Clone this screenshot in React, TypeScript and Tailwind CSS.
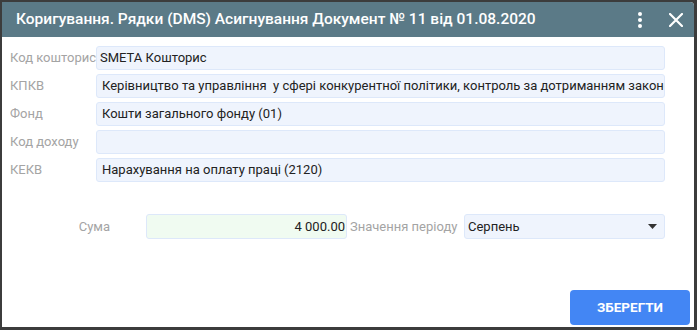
const FIELDS = [
  { label: "Код кошторису", value: "SMETA Кошторис", pad: "pl-[3px]" },
  {
    label: "КПКВ",
    value:
      "Керівництво та управління  у сфері конкурентної політики, контроль за дотриманням законодавства",
    pad: "pl-[5px]",
  },
  { label: "Фонд", value: "Кошти загального фонду (01)", pad: "pl-[5px]" },
  { label: "Код доходу", value: "", pad: "pl-[5px]" },
  { label: "КЕКВ", value: "Нарахування на оплату праці (2120)", pad: "pl-[5px]" },
];

export default function App() {
  return (
    <div className="h-[330px] w-[697px] bg-[#3c3c3c] pb-[3px] pl-[2px] pr-[3px] pt-[2px] font-['Roboto','Liberation_Sans',sans-serif]">
      <div className="flex h-full flex-col overflow-hidden rounded-tr-[4px] bg-white">
        <div className="flex h-[35px] shrink-0 items-center bg-[#5b7a87] pl-[14px] pr-[11px]">
          <span className="flex-1 whitespace-nowrap text-[15.5px] font-medium text-white">
            Коригування. Рядки (DMS) Асигнування Документ № 11 від 01.08.2020
          </span>
          <svg width="6" height="18" viewBox="0 0 6 18" className="mr-[26px]">
            <circle cx="3" cy="3" r="2" fill="white" />
            <circle cx="3" cy="9" r="2" fill="white" />
            <circle cx="3" cy="15" r="2" fill="white" />
          </svg>
          <svg width="14" height="14" viewBox="0 0 14 14">
            <path d="M1 1 L13 13 M13 1 L1 13" stroke="white" strokeWidth="2.2" strokeLinecap="round" />
          </svg>
        </div>

        <div className="flex flex-col gap-[4px] pl-[8px] pr-[29px] pt-[9px]">
          {FIELDS.map((f) => (
            <div key={f.label} className="flex h-[24px] items-center">
              <div className="w-[86px] shrink-0 overflow-hidden whitespace-nowrap text-[13px] text-[#a4a4a4]">
                {f.label}
              </div>
              <div
                className={`flex h-[24px] flex-1 items-center overflow-hidden whitespace-pre rounded-[3px] border border-[#dde8fa] bg-[#eff4fd] ${f.pad} text-[13px] text-[#222]`}
              >
                {f.value}
              </div>
            </div>
          ))}
        </div>

        <div className="mt-[32px] flex h-[25px] items-center pr-[29px]">
          <div className="w-[144px] shrink-0 pr-[36px] text-right text-[13px] text-[#a4a4a4]">Сума</div>
          <div className="flex h-[25px] w-[201px] items-center justify-end rounded-[3px] border border-[#dde8fa] bg-[#f0fbf1] pr-[1px] text-[13px] text-[#222]">
            4 000.00
          </div>
          <div className="w-[117px] shrink-0 whitespace-nowrap pl-[3px] text-[13px] text-[#a4a4a4]">
            Значення періоду
          </div>
          <div className="flex h-[25px] flex-1 items-center justify-between rounded-[3px] border border-[#dde8fa] bg-[#eff4fd] pl-[3px] pr-[7px] text-[13px] text-[#222]">
            <span>Серпень</span>
            <svg width="9" height="5" viewBox="0 0 9 5">
              <path d="M0 0 L9 0 L4.5 5 Z" fill="#333" />
            </svg>
          </div>
        </div>

        <div className="mt-auto flex justify-end pb-[2px] pr-[4px]">
          <button
            type="button"
            className="h-[35px] w-[120px] rounded-[4px] bg-[#4386f4] text-[13.5px] font-bold text-white"
          >
            ЗБЕРЕГТИ
          </button>
        </div>
      </div>
    </div>
  );
}
